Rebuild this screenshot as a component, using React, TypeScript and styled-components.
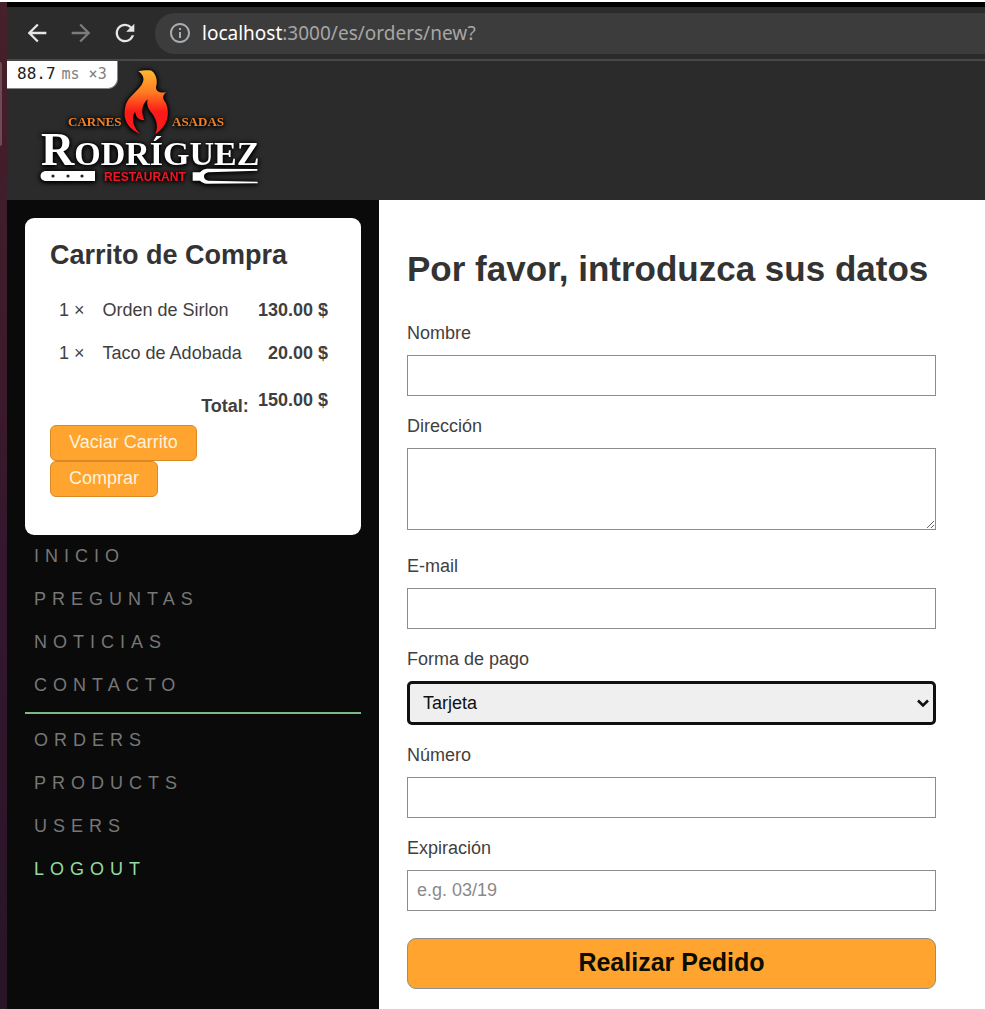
import React from "react";
import styled, { createGlobalStyle } from "styled-components";
import { MdArrowBack, MdArrowForward, MdInfoOutline, MdRefresh } from "react-icons/md";

const SANS = '"Liberation Sans", Arial, sans-serif';

const GlobalStyle = createGlobalStyle`
  *, *::before, *::after { box-sizing: border-box; }
  body { margin: 0; background: #fff; color: #3f3f3f; font-family: ${SANS}; font-size: 18px; line-height: 21px; }
  button, input, textarea, select { font: inherit; }
`;

const Desktop = styled.div`
  display: flex;
  min-height: 100vh;
  border-top: 2px solid #fff;
`;

const DesktopEdge = styled.div`
  flex: 0 0 7px;
  background: linear-gradient(#46202a, #3a1a2b 40%, #34172f 55%, #281527);
`;

const ScrollMark = styled.div`
  width: 2px;
  height: 84px;
  margin-top: 60px;
  background: #6d4b53;
  border-radius: 0 2px 2px 0;
`;

const Browser = styled.div`
  flex: 1;
  min-width: 0;
  display: flex;
  flex-direction: column;
  border-top: 5px solid #000;
`;

const Toolbar = styled.div`
  display: flex;
  align-items: center;
  gap: 16px;
  height: 54px;
  padding-left: 16px;
  background: #2b2b2b;
  border-bottom: 2px solid #484848;
`;

const ToolButton = styled.button<{ $dim?: boolean }>`
  display: flex;
  padding: 0;
  border: 0;
  background: none;
  color: ${(p) => (p.$dim ? "#7c7c7c" : "#e6e6e6")};
  stroke: currentColor;
  stroke-width: ${(p) => (p.$dim ? 0 : "0.4px")};
`;

const AddressBar = styled.div`
  flex: 1;
  display: flex;
  align-items: center;
  gap: 10px;
  height: 41px;
  padding-left: 13px;
  border-radius: 20px 0 0 20px;
  background: #3c3c3c;
  color: #a9adb1;
`;

const Url = styled.span`
  font-family: "Noto Sans", sans-serif;
  font-size: 19px;
  line-height: 24px;
  color: #a6a6a6;
`;

const Host = styled.span`
  color: #fff;
`;

const Header = styled.header`
  position: relative;
  height: 139px;
  padding: 7px 0 0 33px;
  background: #2b2b2b;
`;

const Profiler = styled.div`
  position: absolute;
  top: 0;
  left: 0;
  display: flex;
  gap: 6px;
  height: 28px;
  padding: 0 10px;
  border-right: 1px solid #888;
  border-bottom: 1px solid #888;
  border-radius: 0 0 10px 0;
  background: #fff;
  color: #222;
  font-family: "DejaVu Sans Mono", monospace;
  font-size: 16px;
  line-height: 26px;
`;

const Unit = styled.span`
  color: #808080;
  font-size: 15px;
`;

const Columns = styled.div`
  flex: 1;
  display: flex;
`;

const Sidebar = styled.aside`
  flex: 0 0 372px;
  min-width: 0;
  padding: 18px;
  background: #0a0a0a;
`;

const Cart = styled.section`
  padding: 21px 24px 38px 25px;
  border-radius: 9px;
  background: #fff;
`;

const CartTitle = styled.h2`
  margin: 0 0 18px;
  font-size: 27px;
  line-height: 32px;
  color: #333;
`;

const CartTable = styled.table`
  width: 100%;
  border-collapse: collapse;
`;

const Cell = styled.td`
  height: 43px;
  padding: 0 9px;
  white-space: nowrap;
`;

const ProductName = styled(Cell)`
  padding-right: 7px;
`;

const Price = styled(Cell)`
  font-weight: bold;
  text-align: right;
`;

const TotalLabel = styled.th`
  height: 50px;
  padding: 12px 0 0;
  text-align: right;
`;

const CartButtons = styled.div`
  display: flex;
  flex-direction: column;
  align-items: flex-start;
`;

const CartButton = styled.button`
  height: 36px;
  padding: 0 18px 2px;
  border: 1px solid #d98a26;
  border-radius: 6px;
  background: #ffa42e;
  color: #fdf3dc;
`;

const NavList = styled.ul`
  margin: 0;
  padding: 0;
  list-style: none;

  & + & {
    margin-top: 5px;
    padding-top: 5px;
    border-top: 2px solid #79b98a;
  }
`;

const NavLink = styled.a<{ $accent?: boolean }>`
  display: block;
  padding: 11px 9px;
  color: ${(p) => (p.$accent ? "#93dba4" : "#777")};
  letter-spacing: 6px;
  text-decoration: none;
  text-transform: uppercase;
`;

const Content = styled.main`
  flex: 1;
  min-width: 0;
  padding: 48px 49px 20px 28px;
  background: #fff;
`;

const Title = styled.h1`
  margin: 0 0 33px;
  font-size: 35px;
  line-height: 42px;
  color: #333;
  white-space: nowrap;
`;

const Field = styled.div<{ $gap?: number }>`
  display: flex;
  flex-direction: column;
  gap: 11px;
  margin-bottom: ${(p) => p.$gap ?? 20}px;
`;

const Input = styled.input`
  height: 41px;
  padding: 0 9px;
  border: 1px solid #8c8c8c;
  border-radius: 0;
  color: #111;

  &::placeholder { color: #8a8a8a; }
`;

const TextArea = styled.textarea`
  height: 82px;
  padding: 9px;
  border: 1px solid #8c8c8c;
`;

const SelectBox = styled.div`
  display: grid;
  align-items: center;
`;

const Select = styled.select`
  grid-area: 1 / 1;
  appearance: none;
  height: 44px;
  padding: 0 13px;
  border: 3px solid #101010;
  border-radius: 5px;
  background: #efefef;
  color: #111;
`;

const Chevron = styled.svg`
  grid-area: 1 / 1;
  justify-self: end;
  margin-right: 6px;
  pointer-events: none;
`;

const Submit = styled.button`
  width: 100%;
  height: 51px;
  padding: 0 0 3px;
  border: 1px solid #8f8f8f;
  border-radius: 9px;
  background: #ffa42e;
  color: #0c0c00;
  font-size: 25px;
  font-weight: bold;
`;

const LogoArt = styled.svg`
  display: block;
  overflow: visible;
  filter: drop-shadow(0 1px 2px #000) drop-shadow(0 0 2px #000);
`;

function Logo() {
  return (
    <LogoArt width="220" height="120" viewBox="0 0 220 120" role="img" aria-label="Carnes Asadas Rodríguez Restaurant">
      <defs>
        <linearGradient id="fire" x1="0" y1="0" x2="0" y2="1">
          <stop offset="0" stopColor="#fdb833" />
          <stop offset="0.35" stopColor="#ff7a22" />
          <stop offset="0.65" stopColor="#fb1a1a" />
          <stop offset="1" stopColor="#fa1a1c" />
        </linearGradient>
      </defs>
      <svg x="83" y="1" width="47" height="66" viewBox="369 207 141 198">
        <path
          fill="url(#fire)"
          d="M415 214C430 210 446 210 455 212C468 222 474 240 468 262C468 275 480 280 499 277C488 284 486 295 497 308C508 330 510 375 466 402C476 380 470 355 452 335C442 322 440 312 443 298C427 312 421 335 433 360C418 362 408 352 405 335C392 355 400 385 421 402C385 388 368 360 375 325C378 295 405 282 424 256C434 240 433 226 415 214Z"
        />
      </svg>
      <g fontFamily='"Liberation Serif", serif' fontWeight="bold">
        <g fill="#f08228" fontSize="13">
          <text x="28" y="58">CARNES</text>
          <text x="132" y="58">ASADAS</text>
        </g>
        <text x="1" y="97" fill="#fff" fontSize="34">
          <tspan fontSize="46">R</tspan>ODRÍGUEZ
        </text>
      </g>
      <text x="64" y="113" fill="#f01523" fontFamily='"Liberation Sans", sans-serif' fontWeight="bold" fontSize="12">
        RESTAURANT
      </text>
      <path fill="#fff" d="M5 103H55V113H5C-1 112 -1 104 5 103Z" />
      <g fill="#222">
        <circle cx="13" cy="108" r="1.6" />
        <circle cx="28" cy="108" r="1.6" />
        <circle cx="42" cy="108" r="1.6" />
      </g>
      <svg x="152" y="99" width="68" height="18" viewBox="576 501 204 54">
        <path
          fill="#fff"
          d="M578 517H600C606 510 612 507 620 506L772 507V512L625 517C615 520 612 524 612 529C612 536 615 540 625 542L772 545L774 550L620 551C612 550 606 547 600 542H578Z"
        />
      </svg>
    </LogoArt>
  );
}

const items = [
  { qty: 1, name: "Orden de Sirlon", price: "130.00 $" },
  { qty: 1, name: "Taco de Adobada", price: "20.00 $" },
];

const siteLinks = ["Inicio", "Preguntas", "Noticias", "Contacto"];
const adminLinks = ["Orders", "Products", "Users"];

export default function App() {
  return (
    <Desktop>
      <GlobalStyle />
      <DesktopEdge>
        <ScrollMark />
      </DesktopEdge>
      <Browser>
        <Toolbar>
          <ToolButton aria-label="Atrás"><MdArrowBack size={28} /></ToolButton>
          <ToolButton $dim aria-label="Adelante"><MdArrowForward size={28} /></ToolButton>
          <ToolButton aria-label="Recargar"><MdRefresh size={28} /></ToolButton>
          <AddressBar>
            <MdInfoOutline size={24} />
            <Url><Host>localhost</Host>:3000/es/orders/new?</Url>
          </AddressBar>
        </Toolbar>
        <Header>
          <Logo />
          <Profiler>
            <span>88.7</span>
            <Unit>ms ×3</Unit>
          </Profiler>
        </Header>
        <Columns>
          <Sidebar>
            <Cart>
              <CartTitle>Carrito de Compra</CartTitle>
              <CartTable>
                <tbody>
                  {items.map((item) => (
                    <tr key={item.name}>
                      <Cell>{item.qty} ×</Cell>
                      <ProductName>{item.name}</ProductName>
                      <Price>{item.price}</Price>
                    </tr>
                  ))}
                  <tr>
                    <TotalLabel colSpan={2} scope="row">Total:</TotalLabel>
                    <Price>150.00 $</Price>
                  </tr>
                </tbody>
              </CartTable>
              <CartButtons>
                <CartButton type="button">Vaciar Carrito</CartButton>
                <CartButton type="button">Comprar</CartButton>
              </CartButtons>
            </Cart>
            <nav>
              <NavList>
                {siteLinks.map((label) => (
                  <li key={label}><NavLink href="#">{label}</NavLink></li>
                ))}
              </NavList>
              <NavList>
                {adminLinks.map((label) => (
                  <li key={label}><NavLink href="#">{label}</NavLink></li>
                ))}
                <li><NavLink href="#" $accent>Logout</NavLink></li>
              </NavList>
            </nav>
          </Sidebar>
          <Content>
            <Title>Por favor, introduzca sus datos</Title>
            <form>
              <Field>
                <label htmlFor="name">Nombre</label>
                <Input id="name" type="text" />
              </Field>
              <Field $gap={26}>
                <label htmlFor="address">Dirección</label>
                <TextArea id="address" />
              </Field>
              <Field>
                <label htmlFor="email">E-mail</label>
                <Input id="email" type="email" />
              </Field>
              <Field>
                <label htmlFor="pay">Forma de pago</label>
                <SelectBox>
                  <Select id="pay" defaultValue="card">
                    <option value="card">Tarjeta</option>
                  </Select>
                  <Chevron width="14" height="14" viewBox="0 0 14 14" fill="none" stroke="#111" strokeWidth="2.6">
                    <path d="M2 4.5L7 9.5L12 4.5" />
                  </Chevron>
                </SelectBox>
              </Field>
              <Field>
                <label htmlFor="number">Número</label>
                <Input id="number" type="text" />
              </Field>
              <Field $gap={27}>
                <label htmlFor="expiry">Expiración</label>
                <Input id="expiry" type="text" placeholder="e.g. 03/19" />
              </Field>
              <Submit type="submit">Realizar Pedido</Submit>
            </form>
          </Content>
        </Columns>
      </Browser>
    </Desktop>
  );
}
